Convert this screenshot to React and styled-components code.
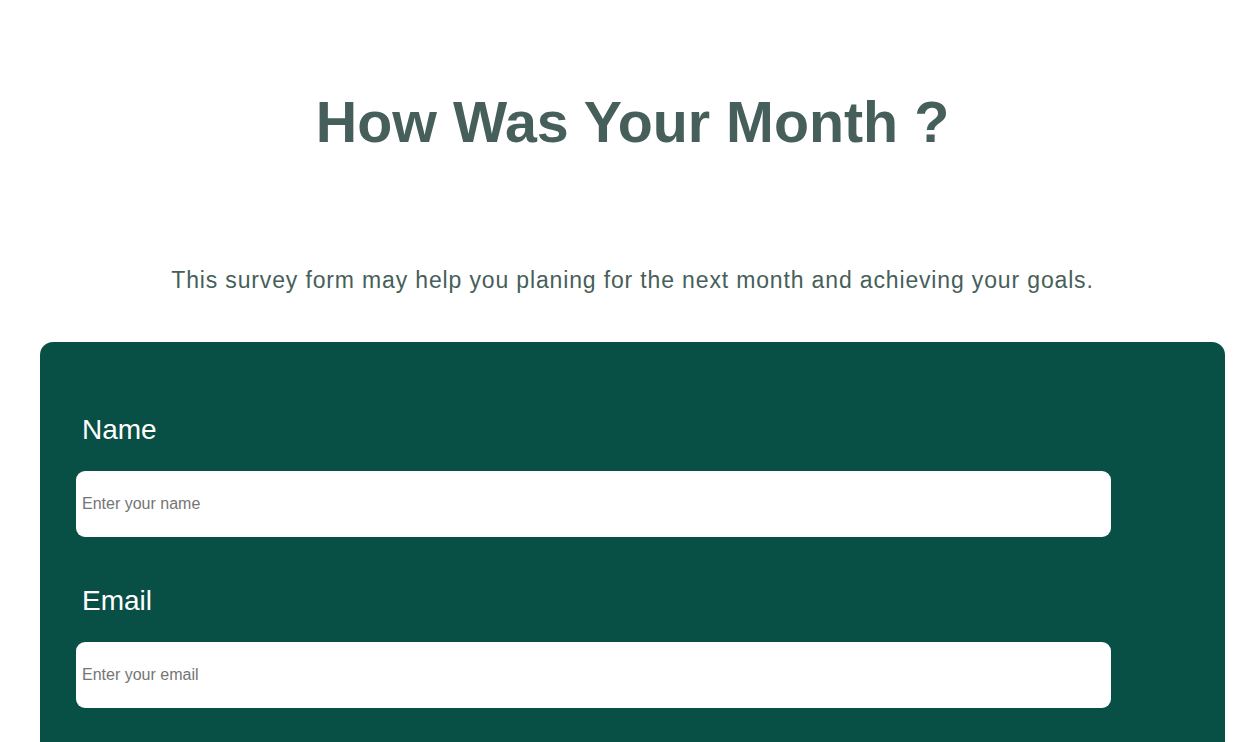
import React from "react";
import styled, { createGlobalStyle } from "styled-components";

const Global = createGlobalStyle`
  html, body { margin: 0; padding: 0; background: #ffffff; }
  body { font-family: "Liberation Sans", Arial, sans-serif; }
  * { box-sizing: border-box; }
`;

const Page = styled.main`
  padding: 0 32px 0 40px;
`;

const Title = styled.h1`
  margin: 0;
  padding-top: 87px;
  text-align: center;
  font-size: 57.4px;
  font-weight: 700;
  line-height: 70px;
  color: #475f5a;
`;

const Subtitle = styled.p`
  margin: 110px 0 0;
  text-align: center;
  font-size: 23px;
  letter-spacing: 0.85px;
  line-height: 26px;
  color: #475f5a;
`;

const Card = styled.form`
  margin-top: 49px;
  background: #084f46;
  border-radius: 13px;
  padding: 70px 36px 40px;
  height: 460px;
`;

const Field = styled.div`
  display: flex;
  flex-direction: column;
  & + & {
    margin-top: 46px;
  }
`;

const Label = styled.label`
  display: block;
  padding-left: 6px;
  font-size: 28px;
  line-height: 36px;
  color: #ffffff;
  margin-bottom: 23px;
`;

const Input = styled.input`
  width: 1035px;
  height: 66px;
  border: none;
  border-radius: 9px;
  background: #ffffff;
  padding: 0 6px;
  font-family: "Liberation Sans", Arial, sans-serif;
  font-size: 16px;
  color: #333;
  outline: none;
  &::placeholder {
    color: #757575;
  }
`;

export default function App() {
  return (
    <>
      <Global />
      <Page>
        <Title>How Was Your Month ?</Title>
        <Subtitle>
          This survey form may help you planing for the next month and achieving your goals.
        </Subtitle>
        <Card>
          <Field>
            <Label htmlFor="name">Name</Label>
            <Input id="name" type="text" placeholder="Enter your name" />
          </Field>
          <Field>
            <Label htmlFor="email">Email</Label>
            <Input id="email" type="email" placeholder="Enter your email" />
          </Field>
        </Card>
      </Page>
    </>
  );
}
